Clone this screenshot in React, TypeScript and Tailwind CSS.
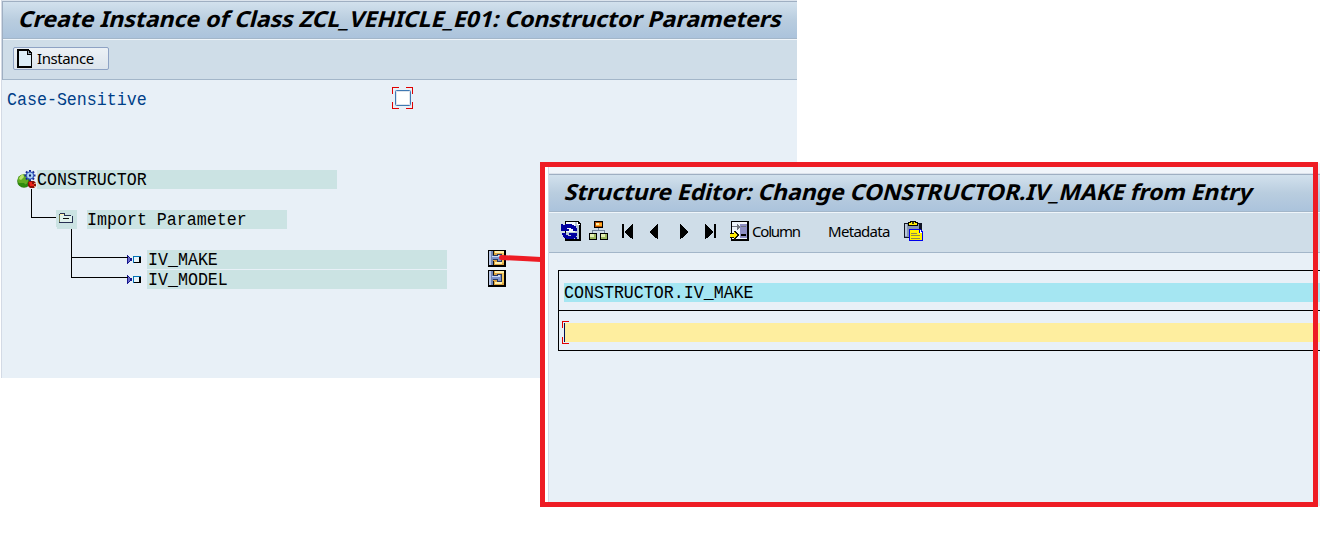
import type { ReactNode } from 'react';

function Title({ text, fit }: { text: string; fit: string }) {
  return (
    <div className="flex h-[38px] shrink-0 items-start border-y border-t-[#9fafc2] border-b-[#a3b6c9] bg-linear-to-b from-[#d2e1ed] via-[#b9cddf] to-[#abc3dc]">
      <div className={`origin-left ${fit}`}>
        <h1 className="-skew-x-[14deg] whitespace-nowrap font-['Noto_Sans'] text-[22px] leading-[32px] font-bold tracking-[-0.1px] text-black">{text}</h1>
      </div>
    </div>
  );
}

function Mono({ children }: { children: ReactNode }) {
  return (
    <span className="block w-max origin-left translate-y-px scale-x-[0.875] whitespace-pre font-['Liberation_Mono',monospace] text-[19px] leading-[19px]">
      {children}
    </span>
  );
}

function PageIcon() {
  return (
    <svg className="h-[19px] w-[15px]" viewBox="0 0 15 19" shapeRendering="crispEdges">
      <path d="M0 0h11l4 4v15H0z" fill="#000" />
      <path d="M2 2h8v4h4v11H2z" fill="#dcedf8" />
      <path d="M11 2h1v2h2v1h-3z" fill="#8fa0ad" />
    </svg>
  );
}

function MethodIcon() {
  return (
    <svg className="h-[20px] w-[20px]" viewBox="0 0 20 20">
      <circle cx="7" cy="11" r="6.8" fill="#2f7d12" />
      <circle cx="6" cy="10" r="5.2" fill="#62ad22" />
      <path d="M2 9q1-4 4-5l1 3-3 3z" fill="#b9e36b" />
      <path d="M1 13h6l3 3-4 1-4-2z" fill="#2d8c0c" />
      <g stroke="#182b94" strokeWidth="2">
        <path d="M13 0v11M7.500 5.500h11M9 1.500l8 8M17 1.500l-8 8" />
      </g>
      <circle cx="13" cy="5.500" r="3.700" fill="#a9d1f4" stroke="#2746b5" />
      <path d="M12 4.500h2v2h-2z" fill="#101c60" />
      <path d="M11 12l2-1h4l2 2v3l-2 2h-4l-2-2z" fill="#8c1208" />
      <path d="M12 12h3v2h2v2h-4z" fill="#ed251a" />
      <path d="M17 13h2v1h-2zM17 16h2v1h-2z" fill="#e2a174" />
    </svg>
  );
}

function FolderIcon() {
  return (
    <svg className="h-5 w-[21px]" viewBox="0 0 21 20" shapeRendering="crispEdges">
      <path d="M0 0h21v19H1v-2H0z" fill="#cbe3e3" />
      <path d="M4 3h5v2h6v1h2v7H3V4h1z" fill="#263052" />
      <path d="M4 4h4v2h8v6H4z" fill="#dff1ec" />
      <path d="M4 4h4v1H4z" fill="#fff0b0" />
      <path d="M3 5h1v7H3z" fill="#777d54" />
      <path d="M7 8h6v1H7z" fill="#111" />
    </svg>
  );
}

function ParameterIcon() {
  return (
    <svg className="h-5 w-[14px]" viewBox="0 0 14 20" shapeRendering="crispEdges">
      <path d="M0 5h1v1h1v1h1v1h2v3H3v1H2v1H1v1H0z" fill="#18188f" />
      <path d="M1 7h1v1h1v3H2v1H1z" fill="#6868c8" />
      <path d="M6 6h8v7H6z" fill="#000" />
      <path d="M6 6h8v1H7v6H6z" fill="#0070b4" />
      <path d="M7 7h5v5H7z" fill="#e7f4fa" />
    </svg>
  );
}

function ValueIcon() {
  return (
    <svg className="h-[17px] w-[18px]" viewBox="0 0 18 17" shapeRendering="crispEdges">
      <path d="M0 0h18v17H0z" fill="#000" />
      <path d="M1 1h15v14H1z" fill="#dca43e" />
      <path d="M7 1h9v2H7z" fill="#ffefac" />
      <path d="M1 1h4v14H1z" fill="#7184b4" />
      <path d="M1 1h2v14H1z" fill="#b8c7e7" />
      <path d="M5 1h1v4H5zM5 11h1v4H5z" fill="#111" />
      <path d="M5 5h4V4h5v8H9v-2H5z" fill="#293862" />
      <path d="M4 6h6V5h3v6h-3V9H4z" fill="#7891cc" />
      <path d="M4 6h6V5h2v2H4z" fill="#c7d7f3" />
      <path d="M7 12h7v2H7z" fill="#fff0ad" />
      <path d="M14 3h2v10h-2z" fill="#f1c75c" />
    </svg>
  );
}

function RefreshIcon() {
  return (
    <svg className="h-5 w-5" viewBox="0 0 20 20" shapeRendering="crispEdges">
      <path d="M4 0h13l3 3v17H4z" fill="#000" />
      <path d="M5 1h11v3h2v14H5z" fill="#b9c9d5" />
      <path d="M5 1h9v10H5z" fill="#f3fafc" />
      <path d="M16 1h1v2h2v1h-3z" fill="#fff" />
      <path d="M0 3h2v1h2V3h7v1h2v1h2v2h1v3h-4V8h-2V7H6v1h2v2H0z" fill="#00009f" />
      <path d="M16 12v3h-1v1h1v2h-2v-1h-1v1H5v-1H3v-1H2v-2H1v-2h4v2h2v1h3v-1H8v-2z" fill="#00009f" />
    </svg>
  );
}

function HierarchyIcon() {
  return (
    <svg className="h-5 w-5" viewBox="0 0 20 20" shapeRendering="crispEdges">
      <path d="M9 7h1v2h6v4h-1v-3H4v3H3V9h6z" fill="#73869b" />
      <path d="M5 0h9v7H5zM0 12h8v7H0zM11 12h8v7h-8z" fill="#000" />
      <path d="M6 1h7v5H6z" fill="#b74b00" />
      <path d="M7 2h6v3H7z" fill="#ffaa22" />
      <path d="M7 2h3v2H7z" fill="#fff1a9" />
      <path d="M1 13h6v5H1zM12 13h6v5h-6z" fill="#9eb95f" />
      <path d="M1 13h4v3H1zM12 13h4v3h-4z" fill="#e2efb4" />
    </svg>
  );
}

function StepIcon({ back = false, end = false }: { back?: boolean; end?: boolean }) {
  return (
    <svg className={`h-[15px] w-3 ${back ? '-scale-x-100' : ''}`} viewBox="0 0 12 15" shapeRendering="crispEdges">
      <path d="M0 0h1v1h1v1h1v1h1v1h1v1h1v1h1v1h1v2H7v1H6v1H5v1H4v1H3v1H1v1H0z" fill="#000" />
      {end && <path d="M9 0h2v14H9z" fill="#000" />}
    </svg>
  );
}

function ColumnIcon() {
  return (
    <svg className="h-5 w-[19px]" viewBox="0 0 19 20" shapeRendering="crispEdges">
      <path d="M1 0h18v20H1z" fill="#000" />
      <path d="M2 1h15v17H2z" fill="#edf4fa" />
      <path d="M10 3h7v14h-7z" fill="#8d8fc4" />
      <path d="M10 1h7v2h-7z" fill="#f8fafc" />
      <path d="M2 5h5V3l3 3-3 3V6H2zM11 5h5v1h-5z" fill="#727680" />
      <path d="M11 13h5v2h-5z" fill="#000" />
      <path d="M0 12h4v-2h2v1h1v1h1v1h1v2H8v1H7v1H6v2H4v-2H0z" fill="#131300" />
      <path d="M0 13h4v-2h1v1h1v1h1v2H6v1H5v1H4v-1H0z" fill="#ffec00" />
    </svg>
  );
}

function ClipboardIcon() {
  return (
    <svg className="h-5 w-5" viewBox="0 0 20 20" shapeRendering="crispEdges">
      <path d="M0 2h18v15H0z" fill="#111525" />
      <path d="M1 3h14v13H1z" fill="#8796b2" />
      <path d="M1 3h2v12H1z" fill="#b8c7d8" />
      <path d="M4 1h2V0h6v1h2v4H4z" fill="#000" />
      <path d="M5 2h2V1h4v1h2v2H5z" fill="#ffe900" />
      <path d="M8 1h2v2H8z" fill="#3d3c11" />
      <path d="M5 8h11l3 3v9H5z" fill="#0000ed" />
      <path d="M6 9h9v3h3v7H6z" fill="#fff200" />
      <path d="M16 9h1v2h1v1h-2z" fill="#fff" />
      <path d="M7 12h6v1H7zM7 14h9v1H7zM7 17h9v1H7z" fill="#8b8753" />
    </svg>
  );
}

function ParameterRow({ name }: { name: string }) {
  return (
    <div className="flex h-5 items-start pl-[125px]">
      <div className="flex w-5 items-start"><ParameterIcon /></div>
      <div className="flex h-[19px] w-[300px] items-center bg-[#cbe3e3] pl-px text-black"><Mono>{name}</Mono></div>
      <div className="ml-[41px]"><ValueIcon /></div>
    </div>
  );
}

function ConstructorWindow() {
  return (
    <section className="absolute top-0 left-px flex h-[378px] w-[796px] flex-col border-l border-[#d3dae5] bg-[#e8f0f7]">
      <div className="h-px shrink-0 bg-[#dce4ed]" />
      <div className="border-l border-[#9fafc2] [&_h1]:ml-4">
        <Title text="Create Instance of Class ZCL_VEHICLE_E01: Constructor Parameters" fit="scale-x-[1.053]" />
        <div className="flex h-[41px] items-start border-y border-t-[#eff5fa] border-b-[#a3b6c9] bg-[#cfdde8] pt-[7px] pl-[10px]">
          <button className="flex h-[23px] w-24 items-center gap-[5px] rounded-[2px] border border-[#8ea2c4] bg-linear-to-b from-[#ecf1f6] to-[#dce4ec] pl-[3px] font-['Noto_Sans'] text-[15px] leading-5 tracking-[-0.45px] text-black">
            <PageIcon /><span className="-mt-0.5">Instance</span>
          </button>
        </div>
      </div>
      <main className="relative flex-1 pt-[10px]">
        <div className="flex h-5 items-start pl-[5px] text-[#003f88]">
          <div className="w-[385px]"><Mono>Case-Sensitive</Mono></div>
          <svg className="-mt-[3px] h-[22px] w-[21px]" viewBox="0 0 21 22">
            <path d="M0 7V0h7v1H1v6zM14 0h7v7h-1V1h-6zM0 15h1v6h6v1H0zM20 15h1v7h-7v-1h6z" fill="#e00000" />
            <rect x="3.500" y="3.500" width="15" height="15" rx="1" fill="#fff" stroke="#3f78b2" />
            <rect x="4.500" y="4.500" width="13" height="13" fill="none" stroke="#dfe5ec" />
          </svg>
        </div>
        <div className="mt-[60px] flex h-5 items-start pl-[15px] text-black">
          <MethodIcon />
          <div className="flex h-[19px] w-[300px] items-center bg-[#cbe3e3]"><Mono>CONSTRUCTOR</Mono></div>
        </div>
        <div className="mt-5 mb-5 flex h-5 items-start pl-[54px] text-black">
          <FolderIcon />
          <div className="ml-[10px] flex h-[19px] w-[200px] items-center bg-[#cbe3e3]"><Mono>Import Parameter</Mono></div>
        </div>
        <ParameterRow name="IV_MAKE" />
        <ParameterRow name="IV_MODEL" />
        <svg className="pointer-events-none absolute top-[108px] left-[29px] h-[92px] w-[97px]" viewBox="0 0 97 92" fill="none" stroke="black" shapeRendering="crispEdges">
          <path d="M.5 1v28.500H25M40.500 41v48.500H97M40.500 69.500H97" />
        </svg>
      </main>
    </section>
  );
}

function StructureEditor() {
  return (
    <section className="absolute top-[163px] left-[548px] flex h-[343px] w-[772px] flex-col overflow-hidden border-l border-[#d3dae8] bg-[#e8f0f7] [&_h1]:ml-4">
      <div className="h-[10px] shrink-0 bg-[#f1f5fa]" />
      <div className="h-px shrink-0 bg-[#dce2eb]" />
      <Title text="Structure Editor: Change CONSTRUCTOR.IV_MAKE from Entry" fit="scale-x-[1.046]" />
      <div className="flex h-[41px] shrink-0 items-start border-y border-t-[#eff5fa] border-b-[#a3b6c9] bg-[#cfdde8] pt-2 pl-3 font-['Noto_Sans'] text-[15px] leading-5 text-black">
        <RefreshIcon />
        <div className="ml-2"><HierarchyIcon /></div>
        <div className="mt-[3px] ml-3"><StepIcon back end /></div>
        <div className="mt-[3px] ml-[13px]"><StepIcon back /></div>
        <div className="mt-[3px] ml-[22px]"><StepIcon /></div>
        <div className="mt-[3px] ml-[13px]"><StepIcon end /></div>
        <div className="ml-[13px]"><ColumnIcon /></div>
        <span className="ml-[3px] w-[76px] tracking-[-1.2px]">Column</span>
        <span className="w-[76px] tracking-[-0.7px]">Metadata</span>
        <ClipboardIcon />
      </div>
      <main className="flex-1 pt-[17px] pl-[9px]">
        <div className="border-y border-l border-black">
          <div className="h-10 border-b border-black pt-3 pl-[5px]">
            <div className="flex h-[19px] items-center bg-[#a5e6f2] text-black"><Mono>CONSTRUCTOR.IV_MAKE</Mono></div>
          </div>
          <div className="h-[39px] pt-3 pl-[5px]">
            <div className="relative h-[19px] border-l border-[#001050] bg-[#feee9f]">
              <svg className="absolute -top-[2px] -left-[3px] h-[23px] w-[7px]" viewBox="0 0 7 23" shapeRendering="crispEdges">
                <path d="M0 0h7v1H1v6H0zM0 16h1v6h6v1H0z" fill="#e00000" />
              </svg>
            </div>
          </div>
        </div>
      </main>
    </section>
  );
}

export default function App() {
  return (
    <div className="relative h-[543px] w-[1339px] overflow-hidden bg-white">
      <ConstructorWindow />
      <div className="absolute top-[162px] left-[540px] h-[345px] w-[778px] bg-white" />
      <StructureEditor />
      <div className="absolute top-[162px] left-[540px] h-[345px] w-[778px] border-[5px] border-[#ee1c24]" />
      <svg className="absolute top-[252px] left-[499px] h-3 w-[44px]" viewBox="0 0 44 12">
        <path d="M2.500 5.500L24 6.500L42 7.500" fill="none" stroke="#ee1c24" strokeWidth="5" strokeLinecap="round" />
      </svg>
    </div>
  );
}
